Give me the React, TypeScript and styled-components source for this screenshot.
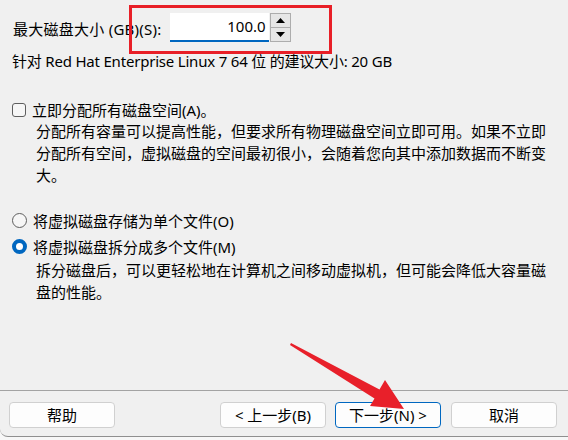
import React from "react";
import styled, { createGlobalStyle } from "styled-components";

const GlobalStyle = createGlobalStyle`
  html, body { margin: 0; padding: 0; background: #f7f7f7; }
  body {
    font-family: "Noto Sans", "Noto Sans CJK SC", sans-serif;
    font-size: 15px;
    color: #000;
  }
`;

const Dialog = styled.div`
  position: relative;
  width: 568px;
  height: 437px;
  background: #f0f0f0;
  border-bottom: 1px solid #8f8f8f;
  border-bottom-left-radius: 8px;
  display: flex;
  flex-direction: column;
  box-sizing: border-box;
  overflow: hidden;
`;

const Content = styled.div`
  flex: 1;
  display: flex;
  flex-direction: column;
  padding: 13px 12px 0 12px;
`;

const SizeRow = styled.div`
  display: flex;
  align-items: center;
  height: 29px;
`;

const Label = styled.span`
  line-height: 22px;
  margin-top: 2px;
  margin-left: 1px;
  margin-right: 8px;
  letter-spacing: 0.25px;
  white-space: nowrap;
`;

const SpinBox = styled.div`
  display: flex;
  align-items: stretch;
  height: 29px;
`;

const NumberField = styled.div`
  width: 99px;
  box-sizing: border-box;
  background: #fff;
  border-bottom: 2px solid #0067c0;
  text-align: right;
  padding-right: 3px;
  line-height: 27px;
`;

const Spinner = styled.div`
  display: flex;
  flex-direction: column;
  width: 21px;
  margin-left: 1px;
`;

const SpinButton = styled.div`
  flex: 1;
  display: flex;
  align-items: center;
  justify-content: center;
  background: #e6e6e6;
  border: 1px solid #adadad;
  & + & { border-top: none; }
`;

const Recommend = styled.div`
  margin-top: 8px;
  line-height: 22px;
  letter-spacing: -0.2px;
`;

const OptionRow = styled.div<{ $top: number; $h?: number }>`
  display: flex;
  align-items: center;
  gap: 6px;
  margin-top: ${(p) => p.$top}px;
  height: ${(p) => p.$h ?? 22}px;
`;

const CheckBox = styled.span`
  width: 14px;
  height: 14px;
  box-sizing: border-box;
  border: 1px solid #5e5e5e;
  border-radius: 3px;
  background: #f6f6f6;
  margin-top: 1px;
`;

const Radio = styled.span<{ $checked?: boolean }>`
  width: 15px;
  height: 15px;
  box-sizing: border-box;
  border-radius: 50%;
  margin-top: 1px;
  ${(p) =>
    p.$checked
      ? `border: 4.5px solid #0067c0; background: #fff;`
      : `border: 1px solid #5e5e5e; background: #f6f6f6;`}
`;

const Description = styled.div`
  padding-left: 24px;
  width: 520px;
  line-height: 22px;
`;

const Footer = styled.div`
  border-top: 1px solid #a3a3a3;
  height: 46px;
  display: flex;
  align-items: flex-start;
  padding: 11px 11px 0 9px;
  box-sizing: border-box;
`;

const Spacer = styled.div`
  flex: 1;
`;

const Button = styled.div<{ $default?: boolean; $gap?: number }>`
  width: 106px;
  height: 26px;
  box-sizing: border-box;
  margin-left: ${(p) => p.$gap ?? 0}px;
  border: 1px solid ${(p) => (p.$default ? "#0067c0" : "#d0d0d0")};
  border-radius: 4px;
  background: #fdfdfd;
  display: flex;
  align-items: center;
  justify-content: center;
  line-height: 22px;
`;

const Highlight = styled.div`
  position: absolute;
  left: 129px;
  top: 5px;
  width: 203px;
  height: 49px;
  box-sizing: border-box;
  border: 3px solid #e81f27;
  pointer-events: none;
`;

const ArrowLayer = styled.svg`
  position: absolute;
  left: 0;
  top: 0;
  pointer-events: none;
`;

const Tri = ({ up }: { up?: boolean }) => (
  <svg width="9" height="5" viewBox="0 0 9 5">
    <polygon points={up ? "0,5 9,5 4.5,0" : "0,0 9,0 4.5,5"} fill="#000" />
  </svg>
);

export default function App() {
  return (
    <>
      <GlobalStyle />
      <Dialog>
        <Content>
          <SizeRow>
            <Label>最大磁盘大小 (GB)(S):</Label>
            <SpinBox>
              <NumberField>100.0</NumberField>
              <Spinner>
                <SpinButton>
                  <Tri up />
                </SpinButton>
                <SpinButton>
                  <Tri />
                </SpinButton>
              </Spinner>
            </SpinBox>
          </SizeRow>
          <Recommend>针对 Red Hat Enterprise Linux 7 64 位 的建议大小: 20 GB</Recommend>
          <OptionRow $top={26}>
            <CheckBox />
            <span>立即分配所有磁盘空间(A)。</span>
          </OptionRow>
          <Description>
            分配所有容量可以提高性能，但要求所有物理磁盘空间立即可用。如果不立即分配所有空间，虚拟磁盘的空间最初很小，会随着您向其中添加数据而不断变大。
          </Description>
          <OptionRow $top={21} $h={26}>
            <Radio />
            <span>将虚拟磁盘存储为单个文件(O)</span>
          </OptionRow>
          <OptionRow $top={0} $h={26}>
            <Radio $checked />
            <span>将虚拟磁盘拆分成多个文件(M)</span>
          </OptionRow>
          <Description>
            拆分磁盘后，可以更轻松地在计算机之间移动虚拟机，但可能会降低大容量磁盘的性能。
          </Description>
          <Spacer />
        </Content>
        <Footer>
          <Button>帮助</Button>
          <Spacer />
          <Button>&lt; 上一步(B)</Button>
          <Button $default $gap={9}>
            下一步(N) &gt;
          </Button>
          <Button $gap={10}>取消</Button>
        </Footer>
        <Highlight />
        <ArrowLayer width="568" height="437" viewBox="0 0 568 437">
          <polygon
            points="291,343 379.5,389.5 385,380 404,409 370,406 374.5,398.5 290,345"
            fill="#e8202a"
          />
        </ArrowLayer>
      </Dialog>
    </>
  );
}
